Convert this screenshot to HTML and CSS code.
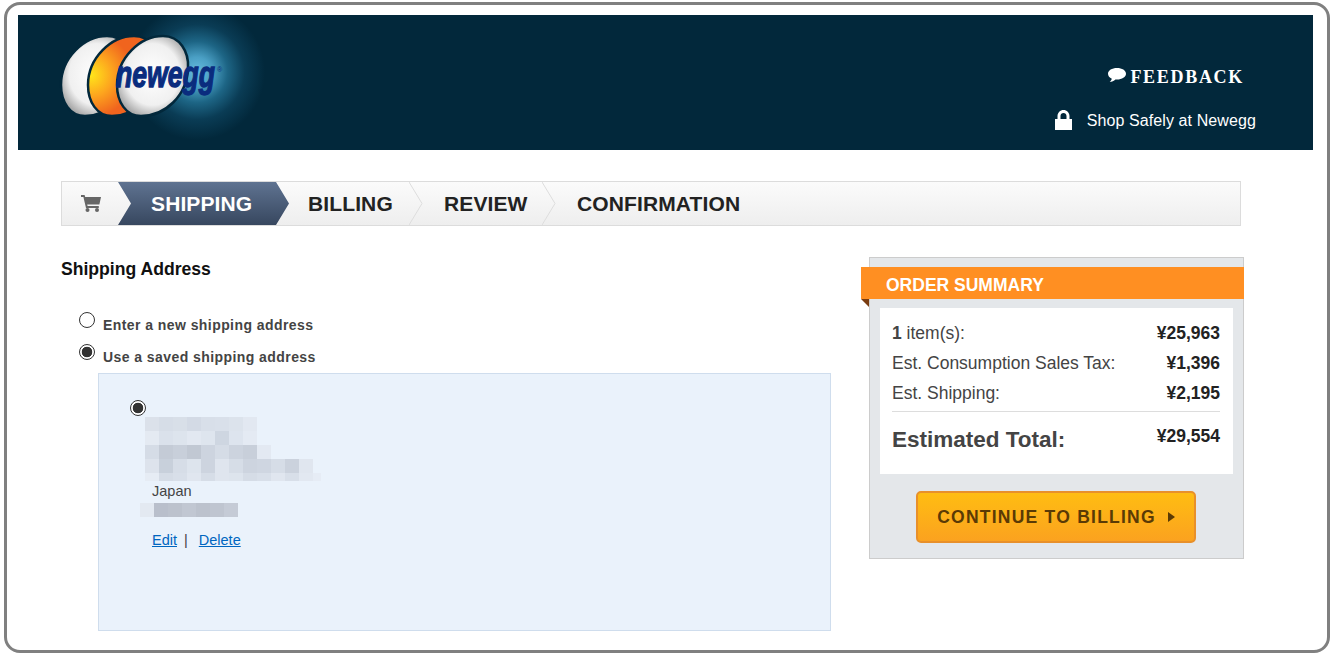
FILE: index.html
```html
<!DOCTYPE html>
<html lang="en">
<head>
<meta charset="utf-8">
<title>Newegg Checkout</title>
<link rel="stylesheet" href="styles.css">
</head>
<body>
<div class="frame">
  <header class="header">
    <svg class="logo" width="260" height="135" viewBox="18 15 260 135">
      <defs>
        <radialGradient id="glow" gradientUnits="userSpaceOnUse" cx="197" cy="72" r="68">
          <stop offset="0" stop-color="#66bce0"/>
          <stop offset=".22" stop-color="#4a9fc4"/>
          <stop offset=".45" stop-color="#1d6585"/>
          <stop offset=".7" stop-color="#0a3c55"/>
          <stop offset="1" stop-color="#02283b"/>
        </radialGradient>
        <radialGradient id="shell" gradientUnits="objectBoundingBox" cx=".5" cy=".48" r=".55">
          <stop offset="0" stop-color="#ffffff"/>
          <stop offset=".7" stop-color="#f0f0f0"/>
          <stop offset="1" stop-color="#aaaaaa"/>
        </radialGradient>
        <radialGradient id="yolk" gradientUnits="userSpaceOnUse" cx="120" cy="75" r="42">
          <stop offset="0" stop-color="#ffe61a"/>
          <stop offset=".5" stop-color="#fda51e"/>
          <stop offset="1" stop-color="#f0641e"/>
        </radialGradient>
      </defs>
      <rect x="130" y="15" width="148" height="135" fill="url(#glow)"/>
      <path class="egg" transform="translate(-56 0)" fill="url(#shell)" d="M163 36C180 36 189 52 188 68C187 96 165 116 141 116C126 116 117 102 117 85C117 58 140 36 163 36Z"/>
      <path class="egg" transform="translate(-29 0)" fill="url(#yolk)" d="M163 36C180 36 189 52 188 68C187 96 165 116 141 116C126 116 117 102 117 85C117 58 140 36 163 36Z"/>
      <path class="egg" fill="url(#shell)" d="M163 36C180 36 189 52 188 68C187 96 165 116 141 116C126 116 117 102 117 85C117 58 140 36 163 36Z"/>
      <text class="logo-word" x="116" y="87" textLength="99" lengthAdjust="spacingAndGlyphs">newegg</text>
      <text class="logo-reg" x="217" y="72">®</text>
    </svg>
    <div class="header-links">
      <a class="feedback">
        <svg width="18" height="15" viewBox="0 0 18 15"><path fill="#fff" d="M9 0C4 0 0 2.400 0 5.800C0 8 1.500 9.700 3.800 10.700C3.500 12 2.600 13.200 1.600 14C3.900 13.800 6 12.800 7.400 11.500C7.900 11.600 8.500 11.600 9 11.600C14 11.600 18 9 18 5.800C18 2.400 14 0 9 0Z"/></svg>
        <span>FEEDBACK</span>
      </a>
      <div class="safe">
        <svg width="17" height="20" viewBox="0 0 17 20"><path fill="#fff" fill-rule="evenodd" d="M2.500 9V6C2.500 2.700 5.200 0 8.500 0S14.500 2.700 14.500 6V9H17V20H0V9ZM5.500 9H11.500V6C11.500 4.300 10.200 3 8.500 3S5.500 4.300 5.500 6Z"/></svg>
        <span>Shop Safely at Newegg</span>
      </div>
    </div>
  </header>

  <div class="content">
    <nav class="steps">
      <div class="step-cart">
        <svg width="20" height="17" viewBox="0 0 20 17"><path fill="#666" d="M0 0H3.600L4.200 2H20L18.400 9.500H6.200L6.600 11H17.800V13H5L2.400 2H0Z"/><circle cx="6.500" cy="15" r="2" fill="#666"/><circle cx="16" cy="15" r="2" fill="#666"/></svg>
      </div>
      <div class="step step-active">SHIPPING</div>
      <div class="step step-billing">BILLING<svg class="sep" width="14" height="43" viewBox="0 0 14 43"><polyline points="0,0 13,21.500 0,43"/></svg></div>
      <div class="step step-review">REVIEW<svg class="sep" width="14" height="43" viewBox="0 0 14 43"><polyline points="0,0 13,21.500 0,43"/></svg></div>
      <div class="step step-confirm">CONFIRMATION</div>
    </nav>

    <div class="columns">
      <main class="address-col">
        <h2 class="section-title">Shipping Address</h2>
        <label class="choice"><input class="radio" type="radio" name="mode"><span>Enter a new shipping address</span></label>
        <label class="choice"><input class="radio" type="radio" name="mode" checked><span>Use a saved shipping address</span></label>
        <section class="saved">
          <input class="radio" type="radio" name="addr" checked>
          <svg class="blur-name" width="176" height="64" viewBox="0 0 176 64">
            <g>
              <rect x="0" y="0" width="14" height="14" fill="#dbe1ea"/><rect x="14" y="0" width="14" height="14" fill="#d6dde7"/><rect x="28" y="0" width="14" height="14" fill="#d8dfe8"/><rect x="42" y="0" width="14" height="14" fill="#d3dae5"/><rect x="56" y="0" width="14" height="14" fill="#d8dfe9"/><rect x="70" y="0" width="14" height="14" fill="#d9e0ea"/><rect x="84" y="0" width="14" height="14" fill="#dce3ec"/><rect x="98" y="0" width="14" height="14" fill="#e2e8f1"/>
              <rect x="0" y="14" width="14" height="14" fill="#e4eaf2"/><rect x="14" y="14" width="14" height="14" fill="#dae1eb"/><rect x="28" y="14" width="14" height="14" fill="#dde4ed"/><rect x="42" y="14" width="14" height="14" fill="#e2e8f1"/><rect x="56" y="14" width="14" height="14" fill="#dee5ee"/><rect x="70" y="14" width="14" height="14" fill="#ced6e1"/><rect x="84" y="14" width="14" height="14" fill="#dde4ee"/><rect x="98" y="14" width="14" height="14" fill="#e4eaf3"/>
              <rect x="0" y="28" width="14" height="14" fill="#d5dce6"/><rect x="14" y="28" width="14" height="14" fill="#c4cbd6"/><rect x="28" y="28" width="14" height="14" fill="#c8cfda"/><rect x="42" y="28" width="14" height="14" fill="#c1c8d3"/><rect x="56" y="28" width="14" height="14" fill="#cdd4df"/><rect x="70" y="28" width="14" height="14" fill="#d5dce6"/><rect x="84" y="28" width="14" height="14" fill="#ccd3de"/><rect x="98" y="28" width="14" height="14" fill="#c8cfda"/><rect x="112" y="28" width="14" height="14" fill="#e3e9f2"/>
              <rect x="0" y="42" width="14" height="14" fill="#dde3ec"/><rect x="14" y="42" width="14" height="14" fill="#c8d0db"/><rect x="28" y="42" width="14" height="14" fill="#d6dde7"/><rect x="42" y="42" width="14" height="14" fill="#dde4ed"/><rect x="56" y="42" width="14" height="14" fill="#cdd4df"/><rect x="70" y="42" width="14" height="14" fill="#dfe5ee"/><rect x="84" y="42" width="14" height="14" fill="#d6dde7"/><rect x="98" y="42" width="14" height="14" fill="#cdd4df"/><rect x="112" y="42" width="14" height="14" fill="#cfd6e1"/><rect x="126" y="42" width="14" height="14" fill="#d6dde7"/><rect x="140" y="42" width="14" height="14" fill="#cbd2dd"/><rect x="154" y="42" width="14" height="14" fill="#e0e6ef"/>
              <rect x="0" y="56" width="14" height="8" fill="#e6ecf4"/><rect x="14" y="56" width="14" height="8" fill="#d5dce6"/><rect x="28" y="56" width="14" height="8" fill="#d8dfe9"/><rect x="42" y="56" width="14" height="8" fill="#e0e6ef"/><rect x="56" y="56" width="14" height="8" fill="#d6dde7"/><rect x="70" y="56" width="14" height="8" fill="#dfe5ee"/><rect x="84" y="56" width="14" height="8" fill="#dde4ed"/><rect x="98" y="56" width="14" height="8" fill="#d5dce6"/><rect x="112" y="56" width="14" height="8" fill="#d8dfe9"/><rect x="126" y="56" width="14" height="8" fill="#e0e6ef"/><rect x="140" y="56" width="14" height="8" fill="#d8dfe9"/><rect x="154" y="56" width="14" height="8" fill="#e2e8f1"/><rect x="168" y="56" width="8" height="8" fill="#e6ecf5"/>
            </g>
          </svg>
          <div class="country">Japan</div>
          <svg class="blur-phone" width="98" height="14" viewBox="0 0 98 14">
            <rect x="0" y="0" width="14" height="14" fill="#e3e9f1"/><rect x="14" y="0" width="14" height="14" fill="#b9bfcb"/><rect x="28" y="0" width="14" height="14" fill="#bcc2cd"/><rect x="42" y="0" width="14" height="14" fill="#c1c7d2"/><rect x="56" y="0" width="14" height="14" fill="#bcc2cd"/><rect x="70" y="0" width="14" height="14" fill="#bfc5d0"/><rect x="84" y="0" width="14" height="14" fill="#c5cbd6"/>
          </svg>
          <div class="addr-actions"><a class="link" href="#">Edit</a><span class="pipe">|</span><a class="link" href="#">Delete</a></div>
        </section>
      </main>

      <aside class="summary">
        <h3 class="ribbon">ORDER SUMMARY</h3>
        <div class="summary-body">
          <div class="row"><span><b>1</b> item(s):</span><b class="val">¥25,963</b></div>
          <div class="row"><span>Est. Consumption Sales Tax:</span><b class="val">¥1,396</b></div>
          <div class="row"><span>Est. Shipping:</span><b class="val">¥2,195</b></div>
          <div class="row-total"><b class="total-label">Estimated Total:</b><b class="val">¥29,554</b></div>
        </div>
        <div class="cta-wrap">
          <button class="cta" type="button">CONTINUE TO BILLING<i class="caret"></i></button>
        </div>
      </aside>
    </div>
  </div>
</div>
</body>
</html>
```
FILE: styles.css
```css
* { box-sizing: border-box; }
html, body { margin: 0; padding: 0; background: #fff; }
body { font-family: "Liberation Sans", Arial, sans-serif; color: #444; }

.frame {
  width: 1326px;
  height: 651px;
  margin: 2px 0 0 4px;
  padding: 10px 14px 0 11px;
  border: 3px solid #808080;
  border-radius: 16px;
  overflow: hidden;
}

/* Header */
.header {
  display: flex;
  justify-content: space-between;
  height: 135px;
  background: #02283b;
}
.logo { display: block; }
.egg { stroke: #02283b; stroke-width: 2.5; }
.logo-word {
  font: italic 700 37px "Liberation Sans", Arial, sans-serif;
  fill: #0a2c7e;
  stroke: #0a2c7e;
  stroke-width: 1.300;
}
.logo-reg { font: 7px "Liberation Sans", Arial, sans-serif; fill: #0a2c7e; }

.header-links {
  display: flex;
  flex-direction: column;
  align-items: flex-end;
  padding: 52px 57px 0 0;
  color: #fff;
}
.feedback {
  display: flex;
  align-items: flex-start;
  gap: 4px;
  margin-right: 12px;
  height: 20px;
  font: 700 18px/20px "Liberation Serif", "Times New Roman", serif;
  letter-spacing: 1.700px;
}
.feedback svg { margin-top: 1px; }
.safe {
  display: flex;
  align-items: center;
  gap: 15px;
  margin-top: 24px;
  font-size: 16px;
  letter-spacing: .1px;
  line-height: 20px;
}
.safe svg { margin-top: -2px; }

/* Steps */
.content { padding: 31px 72px 0 43px; }
.steps {
  display: flex;
  height: 45px;
  width: 1180px;
  border: 1px solid #dcdcdc;
  background: linear-gradient(#fbfbfb, #eeeeee);
  font-size: 21px;
  font-weight: 700;
  letter-spacing: .12px;
  line-height: 43px;
  color: #222;
}
.step-cart {
  width: 56px;
  display: flex;
  align-items: center;
  padding-left: 19px;
}
.step { position: relative; }
.step-active {
  width: 171px;
  padding-left: 33px;
  color: #fff;
  background: linear-gradient(#5f7391, #37475f);
  clip-path: polygon(0 0, 158px 0, 171px 50%, 158px 100%, 0 100%, 13px 50%);
}
.step-billing { width: 134px; padding-left: 19px; }
.step-review { width: 133px; padding-left: 21px; }
.step-confirm { padding-left: 21px; }
.sep {
  position: absolute;
  top: 0;
  right: 0;
  fill: none;
  stroke: #dddddd;
  stroke-width: 1;
}

/* Columns */
.columns {
  display: flex;
  margin-top: 31px;
  width: 1183px;
  justify-content: space-between;
}
.address-col { width: 770px; }
.section-title {
  margin: 0;
  font-size: 17.600px;
  line-height: 24px;
  color: #111;
}
.choice {
  display: flex;
  align-items: flex-start;
  height: 32px;
  padding-left: 18px;
  font-size: 14px;
  font-weight: 700;
  letter-spacing: .43px;
  line-height: 20px;
  color: #444;
}
.choice:first-of-type { margin-top: 31px; }
.choice span { margin: 3px 0 0 8px; }
.radio {
  appearance: none;
  -webkit-appearance: none;
  display: block;
  flex: none;
  width: 16px;
  height: 16px;
  margin: 0;
  border: 1px solid #333;
  border-radius: 50%;
  background: #fff;
}
.radio:checked {
  background: radial-gradient(circle, #333 0 5px, #fff 5.600px);
}
.saved {
  width: 733px;
  height: 258px;
  margin: -3px 0 0 37px;
  padding: 26px 0 0 31px;
  border: 1px solid #cfdded;
  background: #eaf2fb;
}
.blur-name { display: block; margin: 1px 0 0 15px; }
.country {
  margin: 2px 0 0 22px;
  font-size: 14.500px;
  line-height: 16px;
}
.blur-phone { display: block; margin: 4px 0 0 10px; }
.addr-actions {
  display: flex;
  margin: 15px 0 0 22px;
  font-size: 14.500px;
  line-height: 16px;
}
.link { color: #0066c0; }
.pipe { margin: 0 11px 0 7px; }

/* Summary */
.summary {
  position: relative;
  width: 375px;
  height: 302px;
  border: 1px solid #cccccc;
  background: #e4e7ea;
}
.ribbon {
  position: relative;
  height: 32px;
  margin: 9px -1px 0 -9px;
  padding-left: 25px;
  background: #ff8f22;
  color: #fff;
  font-size: 17.500px;
  line-height: 36px;
}
.ribbon::after {
  content: "";
  position: absolute;
  left: 0;
  top: 32px;
  border-top: 8px solid #7a3c10;
  border-left: 8px solid transparent;
}
.summary-body {
  height: 166px;
  margin: 9px 10px 0;
  padding: 10px 13px 0 12px;
  background: #fff;
}
.row {
  display: flex;
  justify-content: space-between;
  font-size: 17.500px;
  line-height: 30px;
}
.val { color: #222; font-size: 17.500px; }
.row-total {
  display: flex;
  justify-content: space-between;
  align-items: flex-start;
  margin-top: 3px;
  padding-top: 9px;
  border-top: 1px solid #dddddd;
  line-height: 30px;
}
.total-label { margin-top: 4px; font-size: 22.500px; }
.cta-wrap { display: flex; justify-content: center; margin-top: 17px; padding-right: 1px; }
.cta {
  display: flex;
  align-items: center;
  justify-content: center;
  width: 280px;
  height: 52px;
  padding: 0;
  border: 2px solid #e8902a;
  border-radius: 5px;
  background: linear-gradient(#ffbd12, #fba21f);
  color: #5a3a05;
  font: 700 17.500px "Liberation Sans", Arial, sans-serif;
  letter-spacing: 1.240px;
}
.caret {
  margin-left: 12px;
  border-left: 7px solid #5a3a05;
  border-top: 5px solid transparent;
  border-bottom: 5px solid transparent;
}
```
